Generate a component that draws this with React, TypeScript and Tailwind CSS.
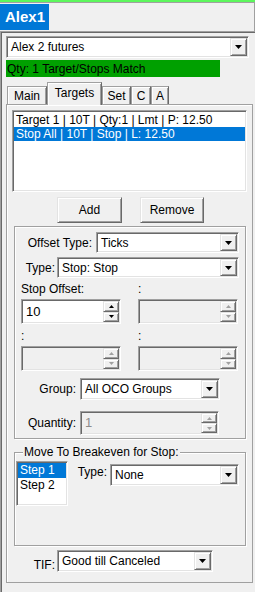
import React from "react";

const sunken =
  "border border-t-[#a0a0a0] border-l-[#a0a0a0] border-r-white border-b-white shadow-[inset_1px_1px_0_#696969,inset_-1px_-1px_0_#e3e3e3]";
const raised =
  "border border-t-[#e3e3e3] border-l-[#e3e3e3] border-r-[#696969] border-b-[#696969] shadow-[inset_1px_1px_0_#fff,inset_-1px_-1px_0_#a0a0a0]";
const etched =
  "border border-[#a0a0a0] shadow-[inset_1px_1px_0_#fff,1px_1px_0_#fff]";

function DownArrow() {
  return (
    <svg width="7" height="4" viewBox="0 0 7 4" className="block">
      <polygon points="0,0 7,0 3.5,4" fill="#000" />
    </svg>
  );
}

function SpinArrow({ up, disabled }: { up?: boolean; disabled?: boolean }) {
  return (
    <svg width="5" height="3" viewBox="0 0 5 3" className="block">
      <polygon
        points={up ? "0,3 5,3 2.5,0" : "0,0 5,0 2.5,3"}
        fill={disabled ? "#a0a0a0" : "#000"}
      />
    </svg>
  );
}

function Combo({ value, className }: { value: string; className: string }) {
  return (
    <div className={`flex bg-white p-[1px] ${sunken} ${className}`}>
      <div className="flex flex-1 items-center truncate pl-[3px]">{value}</div>
      <div className={`flex w-[17px] items-center justify-center bg-[#f0f0f0] ${raised}`}>
        <DownArrow />
      </div>
    </div>
  );
}

function Spin({
  value,
  disabled,
  className,
}: {
  value?: string;
  disabled?: boolean;
  className: string;
}) {
  return (
    <div
      className={`flex p-[1px] ${sunken} ${disabled ? "bg-[#f0f0f0] text-[#8d8d8d]" : "bg-white"} ${className}`}
    >
      <div className="flex flex-1 items-center pl-[3px] text-[13px]">{value}</div>
      <div className="flex w-[16px] flex-col">
        <div className={`flex flex-1 items-center justify-center bg-[#f0f0f0] ${raised}`}>
          <SpinArrow up disabled={disabled} />
        </div>
        <div className={`flex flex-1 items-center justify-center bg-[#f0f0f0] ${raised}`}>
          <SpinArrow disabled={disabled} />
        </div>
      </div>
    </div>
  );
}

function Tab({ label, width, selected }: { label: string; width: string; selected?: boolean }) {
  return (
    <div
      className={`flex items-center justify-center border-l border-t border-r border-l-[#a0a0a0] border-t-[#a0a0a0] border-r-[#696969] bg-[#f0f0f0] shadow-[inset_1px_1px_0_#fff,inset_-1px_0_0_#a0a0a0] ${width} ${
        selected ? "relative z-10 h-[23px] pb-[2px]" : "mb-[1px] h-[18px]"
      }`}
    >
      {label}
    </div>
  );
}

export default function App() {
  return (
    <div className="h-[592px] w-[255px] overflow-hidden bg-[#f0f0f0] font-['Liberation_Sans',Arial,sans-serif] text-[12px] leading-[14px] text-black">
      <div className="h-[2px] bg-[#5df75d]" />
      <div className="h-[1px] bg-[#a0a0a0]" />
      <div className="flex h-[28px] border-r border-[#a0a0a0]">
        <div className="mt-[1px] flex h-[26px] w-[49px] items-center bg-[#0078d7] pl-[5px] text-[15px] font-bold text-white">
          Alex1
        </div>
      </div>

      <div className="h-[561px] border-l border-t border-[#a0a0a0] pl-[1px] pt-[1px] shadow-[inset_1px_1px_0_#696969]">
        <Combo value="Alex 2 futures" className="ml-[4px] mt-[3px] h-[22px] w-[243px]" />
        <div className="ml-[4px] mt-[2px] flex h-[17px] w-[214px] items-center bg-[#00a000] pl-[1px]">
          Qty: 1 Target/Stops Match
        </div>

        <div className="-mb-[1px] ml-[5px] mt-[5px] flex h-[23px] items-end">
          <Tab label="Main" width="w-[40px]" />
          <Tab label="Targets" width="w-[55px]" selected />
          <Tab label="Set" width="w-[29px]" />
          <Tab label="C" width="w-[20px]" />
          <Tab label="A" width="w-[18px]" />
        </div>

        <div className="ml-[4px] h-[479px] w-[247px] border border-[#a0a0a0] shadow-[inset_1px_1px_0_#fff]">
          <div className={`ml-[5px] mt-[5px] h-[82px] w-[235px] bg-white px-[1px] pt-[2px] ${sunken}`}>
            <div className="h-[14px] pl-[2px]">Target 1 | 10T | Qty:1 | Lmt | P: 12.50</div>
            <div className="h-[14px] bg-[#0078d7] pl-[2px] text-white">Stop All | 10T | Stop | L: 12.50</div>
          </div>

          <div className="mt-[5px] flex gap-[18px] pl-[50px]">
            <div className={`flex h-[26px] w-[65px] items-center justify-center bg-[#f0f0f0] ${raised}`}>Add</div>
            <div className={`flex h-[26px] w-[64px] items-center justify-center bg-[#f0f0f0] ${raised}`}>Remove</div>
          </div>

          <div className={`ml-[7px] mt-[3px] h-[213px] w-[232px] ${etched}`}>
            <div className="mt-[5px] flex items-center">
              <div className="w-[77px] text-right">Offset Type:</div>
              <Combo value="Ticks" className="ml-[4px] h-[21px] w-[143px]" />
            </div>
            <div className="mt-[4px] flex items-center">
              <div className="w-[40px] text-right">Type:</div>
              <Combo value="Stop: Stop" className="ml-[2px] h-[21px] w-[182px]" />
            </div>

            <div className="mt-[4px] flex gap-[17px] pl-[6px]">
              <div className="w-[100px]">Stop Offset:</div>
              <div className="w-[100px]">:</div>
            </div>
            <div className="mt-[3px] flex gap-[17px] pl-[6px]">
              <Spin value="10" className="h-[25px] w-[100px]" />
              <Spin disabled className="h-[25px] w-[100px]" />
            </div>
            <div className="mt-[5px] flex gap-[17px] pl-[6px]">
              <div className="w-[100px]">:</div>
              <div className="w-[100px]">:</div>
            </div>
            <div className="mt-[3px] flex gap-[17px] pl-[6px]">
              <Spin disabled className="h-[25px] w-[100px]" />
              <Spin disabled className="h-[25px] w-[100px]" />
            </div>

            <div className="mt-[7px] flex items-center">
              <div className="w-[61px] text-right">Group:</div>
              <Combo value="All OCO Groups" className="ml-[4px] h-[22px] w-[140px]" />
            </div>
            <div className="mt-[11px] flex items-center">
              <div className="w-[61px] text-right">Quantity:</div>
              <Spin value="1" disabled className="ml-[4px] h-[24px] w-[139px]" />
            </div>
          </div>

          <div className={`relative ml-[7px] mt-[13px] h-[94px] w-[232px] pt-[8px] ${etched}`}>
            <div className="absolute -top-[8px] left-[8px] bg-[#f0f0f0] px-[1px]">Move To Breakeven for Stop:</div>
            <div className="flex items-start">
              <div className={`ml-[1px] h-[45px] w-[52px] bg-white px-[1px] pt-[1px] leading-[15px] ${sunken}`}>
                <div className="bg-[#0078d7] pl-[2px] text-white">Step 1</div>
                <div className="pl-[2px]">Step 2</div>
              </div>
              <div className="w-[42px] pr-[3px] pt-[4px] text-right">Type:</div>
              <Combo value="None" className="mt-[3px] h-[22px] w-[129px]" />
            </div>
          </div>

          <div className="mt-[4px] flex items-end">
            <div className="w-[48px] text-right">TIF:</div>
            <Combo value="Good till Canceled" className="ml-[2px] h-[22px] w-[156px]" />
          </div>
        </div>
      </div>
    </div>
  );
}
